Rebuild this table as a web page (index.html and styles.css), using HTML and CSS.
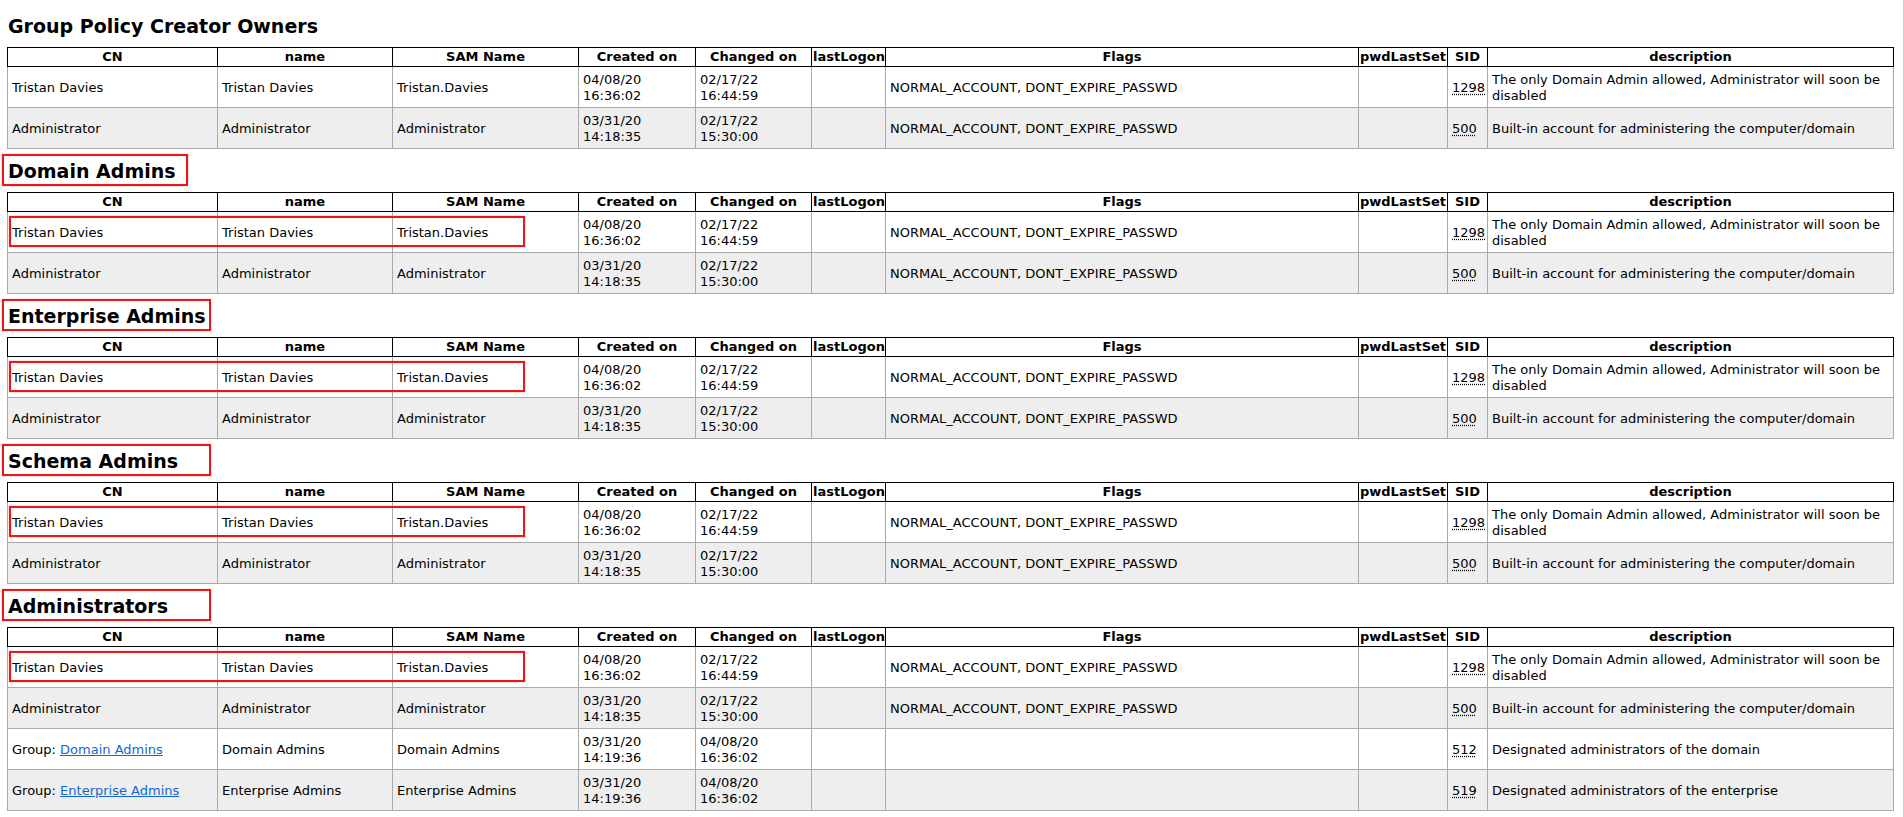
FILE: index.html
```html
<!DOCTYPE html>
<html>
<head>
<meta charset="utf-8">
<title>Group membership</title>
<link rel="stylesheet" href="styles.css">
</head>
<body>
<div class="page">

<section class="group">
  <h3 class="group-title">Group Policy Creator Owners</h3>
  <div class="tbl-wrap">
    <table class="members">
      <colgroup>
        <col class="c-cn"><col class="c-name"><col class="c-sam"><col class="c-created"><col class="c-changed"><col class="c-logon"><col class="c-flags"><col class="c-pwd"><col class="c-sid"><col class="c-desc">
      </colgroup>
      <thead>
        <tr><th>CN</th><th>name</th><th>SAM Name</th><th>Created on</th><th>Changed on</th><th>lastLogon</th><th>Flags</th><th>pwdLastSet</th><th>SID</th><th>description</th></tr>
      </thead>
      <tbody>
        <tr><td>Tristan Davies</td><td>Tristan Davies</td><td>Tristan.Davies</td><td>04/08/20 16:36:02</td><td>02/17/22 16:44:59</td><td></td><td>NORMAL_ACCOUNT, DONT_EXPIRE_PASSWD</td><td></td><td><abbr class="sid" title="S-1-5-21-1298">1298</abbr></td><td>The only Domain Admin allowed, Administrator will soon be disabled</td></tr>
        <tr><td>Administrator</td><td>Administrator</td><td>Administrator</td><td>03/31/20 14:18:35</td><td>02/17/22 15:30:00</td><td></td><td>NORMAL_ACCOUNT, DONT_EXPIRE_PASSWD</td><td></td><td><abbr class="sid" title="S-1-5-21-500">500</abbr></td><td>Built-in account for administering the computer/domain</td></tr>
      </tbody>
    </table>
  </div>
</section>

<section class="group">
  <h3 class="group-title marked mark-sm">Domain Admins</h3>
  <div class="tbl-wrap">
    <table class="members">
      <colgroup>
        <col class="c-cn"><col class="c-name"><col class="c-sam"><col class="c-created"><col class="c-changed"><col class="c-logon"><col class="c-flags"><col class="c-pwd"><col class="c-sid"><col class="c-desc">
      </colgroup>
      <thead>
        <tr><th>CN</th><th>name</th><th>SAM Name</th><th>Created on</th><th>Changed on</th><th>lastLogon</th><th>Flags</th><th>pwdLastSet</th><th>SID</th><th>description</th></tr>
      </thead>
      <tbody>
        <tr><td>Tristan Davies</td><td>Tristan Davies</td><td>Tristan.Davies</td><td>04/08/20 16:36:02</td><td>02/17/22 16:44:59</td><td></td><td>NORMAL_ACCOUNT, DONT_EXPIRE_PASSWD</td><td></td><td><abbr class="sid" title="S-1-5-21-1298">1298</abbr></td><td>The only Domain Admin allowed, Administrator will soon be disabled</td></tr>
        <tr><td>Administrator</td><td>Administrator</td><td>Administrator</td><td>03/31/20 14:18:35</td><td>02/17/22 15:30:00</td><td></td><td>NORMAL_ACCOUNT, DONT_EXPIRE_PASSWD</td><td></td><td><abbr class="sid" title="S-1-5-21-500">500</abbr></td><td>Built-in account for administering the computer/domain</td></tr>
      </tbody>
    </table>
    <div class="row-mark"></div>
  </div>
</section>

<section class="group">
  <h3 class="group-title marked mark-lg">Enterprise Admins</h3>
  <div class="tbl-wrap">
    <table class="members">
      <colgroup>
        <col class="c-cn"><col class="c-name"><col class="c-sam"><col class="c-created"><col class="c-changed"><col class="c-logon"><col class="c-flags"><col class="c-pwd"><col class="c-sid"><col class="c-desc">
      </colgroup>
      <thead>
        <tr><th>CN</th><th>name</th><th>SAM Name</th><th>Created on</th><th>Changed on</th><th>lastLogon</th><th>Flags</th><th>pwdLastSet</th><th>SID</th><th>description</th></tr>
      </thead>
      <tbody>
        <tr><td>Tristan Davies</td><td>Tristan Davies</td><td>Tristan.Davies</td><td>04/08/20 16:36:02</td><td>02/17/22 16:44:59</td><td></td><td>NORMAL_ACCOUNT, DONT_EXPIRE_PASSWD</td><td></td><td><abbr class="sid" title="S-1-5-21-1298">1298</abbr></td><td>The only Domain Admin allowed, Administrator will soon be disabled</td></tr>
        <tr><td>Administrator</td><td>Administrator</td><td>Administrator</td><td>03/31/20 14:18:35</td><td>02/17/22 15:30:00</td><td></td><td>NORMAL_ACCOUNT, DONT_EXPIRE_PASSWD</td><td></td><td><abbr class="sid" title="S-1-5-21-500">500</abbr></td><td>Built-in account for administering the computer/domain</td></tr>
      </tbody>
    </table>
    <div class="row-mark"></div>
  </div>
</section>

<section class="group">
  <h3 class="group-title marked mark-lg">Schema Admins</h3>
  <div class="tbl-wrap">
    <table class="members">
      <colgroup>
        <col class="c-cn"><col class="c-name"><col class="c-sam"><col class="c-created"><col class="c-changed"><col class="c-logon"><col class="c-flags"><col class="c-pwd"><col class="c-sid"><col class="c-desc">
      </colgroup>
      <thead>
        <tr><th>CN</th><th>name</th><th>SAM Name</th><th>Created on</th><th>Changed on</th><th>lastLogon</th><th>Flags</th><th>pwdLastSet</th><th>SID</th><th>description</th></tr>
      </thead>
      <tbody>
        <tr><td>Tristan Davies</td><td>Tristan Davies</td><td>Tristan.Davies</td><td>04/08/20 16:36:02</td><td>02/17/22 16:44:59</td><td></td><td>NORMAL_ACCOUNT, DONT_EXPIRE_PASSWD</td><td></td><td><abbr class="sid" title="S-1-5-21-1298">1298</abbr></td><td>The only Domain Admin allowed, Administrator will soon be disabled</td></tr>
        <tr><td>Administrator</td><td>Administrator</td><td>Administrator</td><td>03/31/20 14:18:35</td><td>02/17/22 15:30:00</td><td></td><td>NORMAL_ACCOUNT, DONT_EXPIRE_PASSWD</td><td></td><td><abbr class="sid" title="S-1-5-21-500">500</abbr></td><td>Built-in account for administering the computer/domain</td></tr>
      </tbody>
    </table>
    <div class="row-mark"></div>
  </div>
</section>

<section class="group">
  <h3 class="group-title marked mark-lg">Administrators</h3>
  <div class="tbl-wrap">
    <table class="members">
      <colgroup>
        <col class="c-cn"><col class="c-name"><col class="c-sam"><col class="c-created"><col class="c-changed"><col class="c-logon"><col class="c-flags"><col class="c-pwd"><col class="c-sid"><col class="c-desc">
      </colgroup>
      <thead>
        <tr><th>CN</th><th>name</th><th>SAM Name</th><th>Created on</th><th>Changed on</th><th>lastLogon</th><th>Flags</th><th>pwdLastSet</th><th>SID</th><th>description</th></tr>
      </thead>
      <tbody>
        <tr><td>Tristan Davies</td><td>Tristan Davies</td><td>Tristan.Davies</td><td>04/08/20 16:36:02</td><td>02/17/22 16:44:59</td><td></td><td>NORMAL_ACCOUNT, DONT_EXPIRE_PASSWD</td><td></td><td><abbr class="sid" title="S-1-5-21-1298">1298</abbr></td><td>The only Domain Admin allowed, Administrator will soon be disabled</td></tr>
        <tr><td>Administrator</td><td>Administrator</td><td>Administrator</td><td>03/31/20 14:18:35</td><td>02/17/22 15:30:00</td><td></td><td>NORMAL_ACCOUNT, DONT_EXPIRE_PASSWD</td><td></td><td><abbr class="sid" title="S-1-5-21-500">500</abbr></td><td>Built-in account for administering the computer/domain</td></tr>
        <tr><td>Group: <a href="#domain-admins">Domain Admins</a></td><td>Domain Admins</td><td>Domain Admins</td><td>03/31/20 14:19:36</td><td>04/08/20 16:36:02</td><td></td><td></td><td></td><td><abbr class="sid" title="S-1-5-21-512">512</abbr></td><td>Designated administrators of the domain</td></tr>
        <tr><td>Group: <a href="#enterprise-admins">Enterprise Admins</a></td><td>Enterprise Admins</td><td>Enterprise Admins</td><td>03/31/20 14:19:36</td><td>04/08/20 16:36:02</td><td></td><td></td><td></td><td><abbr class="sid" title="S-1-5-21-519">519</abbr></td><td>Designated administrators of the enterprise</td></tr>
      </tbody>
    </table>
    <div class="row-mark"></div>
  </div>
</section>

</div>
</body>
</html>
```

FILE: styles.css
```css
html, body {
  margin: 0;
  padding: 0;
  background: #fff;
}

body {
  min-height: 100vh;
  border-right: 1px solid #cfcfcf;
  box-sizing: border-box;
  font-family: "DejaVu Sans", Verdana, sans-serif;
  font-size: 13px;
  line-height: 16px;
  color: #000;
}

.page {
  padding: 4px 9px 0 7px;
}

.group-title {
  position: relative;
  margin: 11px 0 10px 1px;
  font-size: 19px;
  line-height: 22px;
  font-weight: bold;
}

.marked::after {
  content: "";
  position: absolute;
  left: -6px;
  top: -6px;
  height: 32px;
  box-sizing: border-box;
  border: 2px solid #f01414;
  box-shadow: 0 0 1px rgba(255, 0, 0, 0.6);
}

.mark-sm::after { width: 186px; }
.mark-lg::after { width: 209px; }

.tbl-wrap {
  position: relative;
}

.members {
  width: 100%;
  table-layout: fixed;
  border-collapse: collapse;
}

.c-cn { width: 210px; }
.c-name { width: 175px; }
.c-sam { width: 186px; }
.c-created { width: 117px; }
.c-changed { width: 116px; }
.c-logon { width: 74px; }
.c-flags { width: 473px; }
.c-pwd { width: 89px; }
.c-sid { width: 40px; }

.members th {
  border: 1px solid #000;
  padding: 1px 1px;
  font-weight: bold;
  text-align: center;
  white-space: nowrap;
  overflow: hidden;
}

.members td {
  border: 1px solid #aaa;
  padding: 5px 4px 3px;
  text-align: left;
  vertical-align: middle;
}

.members tbody tr:nth-child(even) td {
  background: #eee;
}

.members a {
  color: #1467d3;
  text-decoration: underline;
}

.sid {
  text-decoration: underline dotted;
  text-underline-offset: 2px;
}

.row-mark {
  position: absolute;
  left: 2px;
  top: 24px;
  width: 516px;
  height: 31px;
  box-sizing: border-box;
  border: 2px solid #f01414;
  box-shadow: 0 0 1px rgba(255, 0, 0, 0.6);
  pointer-events: none;
}
```
